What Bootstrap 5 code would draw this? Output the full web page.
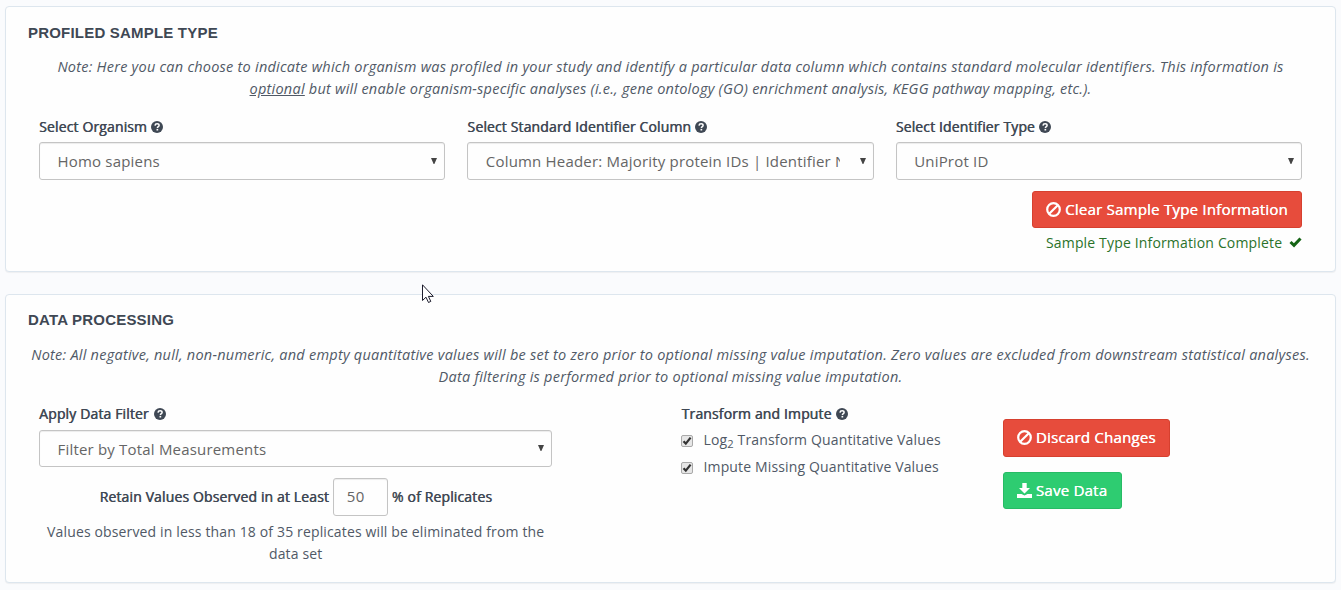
<!DOCTYPE html>
<html lang="en">
<head>
<meta charset="utf-8">
<meta name="viewport" content="width=device-width, initial-scale=1">
<title>Sample type and data processing</title>
<link href="https://cdn.jsdelivr.net/npm/bootstrap@5.3.0/dist/css/bootstrap.min.css" rel="stylesheet">
<style>
body{background:#fafbfd;color:#505966;font-family:"Open Sans",sans-serif;font-size:14px;line-height:22px;letter-spacing:.145px;padding:6px 5px 0;overflow:hidden}
.panel{background:#fefefe;border:1px solid #dde6ee;border-radius:4px;box-shadow:0 1px 1px rgba(0,0,0,.05);padding:15px 22px 0;margin-bottom:22px}
.panel-sample{height:266px}
.panel-data{height:289px;padding-top:14px}
.panel-title{font:bold 15px/22px "Liberation Sans",sans-serif;letter-spacing:.2px;color:#3f4854;margin:0 0 12px;text-transform:uppercase}
.panel-data .panel-title{margin-bottom:13px}
.note{font-style:italic;font-size:14.5px;text-align:center;letter-spacing:.24px;margin:0 0 16px}
.panel-data .note{margin-bottom:15px}
.row{--bs-gutter-x:22px}
.field-label,.retain span{color:#3f4854;text-shadow:.5px 0 0 #3f4854;letter-spacing:.13px}
.field-label{display:block;margin-bottom:4px}
.panel-data .field-label{margin-bottom:5px}
.q{width:12px;height:12px;fill:#3f4854;vertical-align:-1px;margin-left:.5px}
.filter-label .q{margin-left:2px}
.pick,.num{border:1px solid #c4c4c4;border-radius:3px;color:#656565;font-size:15px;line-height:22px;letter-spacing:.19px;background-color:#fefefe;box-shadow:inset 0 1px 1px rgba(0,0,0,.075)}
.pick{height:38px;padding:7px 33px 7px 17.5px;background:#fefefe url("data:image/svg+xml,%3Csvg xmlns='http://www.w3.org/2000/svg' viewBox='0 0 6 6'%3E%3Cpath fill='%23444' d='M0 0h6L3.4 6h-.8z'/%3E%3C/svg%3E") no-repeat right 7px top 15px/6px 6px}
.panel-data .pick{height:37px;background-position:right 7px top 14px}
.btn{--bs-btn-padding-x:13px;--bs-btn-padding-y:5px;--bs-btn-font-size:15px;--bs-btn-line-height:22px;--bs-btn-border-radius:3px;--bs-btn-color:#fff;text-shadow:.3px 0 0 #fff;letter-spacing:.23px;height:37px;padding-bottom:7px}
.btn svg{width:15px;height:15px;vertical-align:-2px}
.btn-danger{--bs-btn-bg:#e74c3c;--bs-btn-border-color:#d6402f}
.btn-success{--bs-btn-bg:#2ecc71;--bs-btn-border-color:#27bb65}
.clear-btn{margin:11px 0 4px}
.complete{color:#2a722a;letter-spacing:.16px}
.complete svg{margin-left:3px;vertical-align:0}
.retain{margin:11px 0 5px}
.num{width:55px;height:38px;padding:6px 13px 8px}
.tick{appearance:none;width:12px;height:12px;flex:none;border:1px solid #a9a9a9;border-radius:2px;margin:2px 10px 0 0;background:#e6e6e6 url("data:image/svg+xml,%3Csvg xmlns='http://www.w3.org/2000/svg' viewBox='0 0 10 10'%3E%3Cpath fill='none' stroke='%23333' stroke-width='2.2' d='M1.5 5.3 3.8 7.6 8.6 1.6'/%3E%3C/svg%3E") center/10px 10px}
.opt{height:22px;margin-bottom:5px;letter-spacing:.15px}
.first-opt{margin-top:-1px}
.opt sub{font-size:80%;line-height:0}
.acts{padding-top:16px;gap:15px}
.acts .btn-danger{height:38px}
.acts .btn-success{padding-right:13.8px}
.pointer{left:422px;top:284px;width:12px;height:20px}
</style>
</head>
<body>
<svg class="d-none">
<symbol id="q" viewBox="0 0 12 12"><circle cx="6" cy="6" r="6"/><path d="M4 4.600C4.100 3.300 5 2.800 6.100 2.800c1.200 0 2 .7 2 1.600C8.100 5.700 6.400 5.700 6.400 7" fill="none" stroke="#fefefe" stroke-width="1.500"/><rect x="5.500" y="7.900" width="1.700" height="1.600" fill="#fefefe"/></symbol>
<symbol id="ban" viewBox="0 0 15 15"><g fill="none" stroke="#fff" stroke-width="2.200"><circle cx="7.500" cy="7.500" r="6.300"/><path d="M3.200 11.800 11.800 3.200"/></g></symbol>
</svg>

<section class="panel panel-sample">
  <h2 class="panel-title">Profiled Sample Type</h2>
  <p class="note">Note: Here you can choose to indicate which organism was profiled in your study and identify a particular data column which contains standard molecular identifiers. This information is <u>optional</u> but will enable organism-specific analyses (i.e., gene ontology (GO) enrichment analysis, KEGG pathway mapping, etc.).</p>
  <div class="row mx-0">
    <div class="col-4">
      <label class="field-label">Select Organism <svg class="q"><use href="#q"/></svg></label>
      <select class="form-select pick"><option>Homo sapiens</option></select>
    </div>
    <div class="col-4">
      <label class="field-label">Select Standard Identifier Column <svg class="q"><use href="#q"/></svg></label>
      <select class="form-select pick"><option>Column Header: Majority protein IDs | Identifier Name</option></select>
    </div>
    <div class="col-4">
      <label class="field-label">Select Identifier Type <svg class="q"><use href="#q"/></svg></label>
      <select class="form-select pick"><option>UniProt ID</option></select>
      <div class="text-end">
        <button class="btn btn-danger clear-btn" type="button"><svg><use href="#ban"/></svg> Clear Sample Type Information</button>
        <div class="complete">Sample Type Information Complete <svg width="13" height="11" viewBox="0 0 13 11"><path d="M1.500 5 5 8.300 11.500 1.500" fill="none" stroke="#156415" stroke-width="3"/></svg></div>
      </div>
    </div>
  </div>
</section>

<section class="panel panel-data">
  <h2 class="panel-title">Data Processing</h2>
  <p class="note">Note: All negative, null, non-numeric, and empty quantitative values will be set to zero prior to optional missing value imputation. Zero values are excluded from downstream statistical analyses. Data filtering is performed prior to optional missing value imputation.</p>
  <div class="row mx-0">
    <div class="col-5">
      <label class="field-label filter-label">Apply Data Filter <svg class="q"><use href="#q"/></svg></label>
      <select class="form-select pick"><option>Filter by Total Measurements</option></select>
      <div class="retain d-flex justify-content-center align-items-center gap-1">
        <span>Retain Values Observed in at Least</span><input class="num" type="text" value="50"><span>% of Replicates</span>
      </div>
      <p class="text-center m-0">Values observed in less than 18 of 35 replicates will be eliminated from the data set</p>
    </div>
    <div class="col-3 offset-1">
      <div class="field-label">Transform and Impute <svg class="q"><use href="#q"/></svg></div>
      <label class="opt first-opt d-flex align-items-center"><input class="tick" type="checkbox" checked><span>Log<sub>2</sub> Transform Quantitative Values</span></label>
      <label class="opt d-flex align-items-center"><input class="tick" type="checkbox" checked><span>Impute Missing Quantitative Values</span></label>
    </div>
    <div class="col-3 d-flex flex-column align-items-start acts">
      <button class="btn btn-danger" type="button"><svg><use href="#ban"/></svg> Discard Changes</button>
      <button class="btn btn-success" type="button"><svg viewBox="0 0 15 15"><path fill="#fff" d="M5.300 0h4.400v5h3.300L7.500 10.500 2 5h3.300zM0 11h4.500l3 1.500 3-1.500H15v4H0z"/></svg> Save Data</button>
    </div>
  </div>
</section>
<svg class="pointer position-absolute" viewBox="0 0 12 20"><path d="M.5.800V16.500L4 13.200l2.500 5.300 2.300-1.100-2.400-5h4.900z" fill="#fff" stroke="#1c1c2c"/></svg>
<script src="https://cdn.jsdelivr.net/npm/bootstrap@5.3.0/dist/js/bootstrap.bundle.min.js"></script>
</body>
</html>
